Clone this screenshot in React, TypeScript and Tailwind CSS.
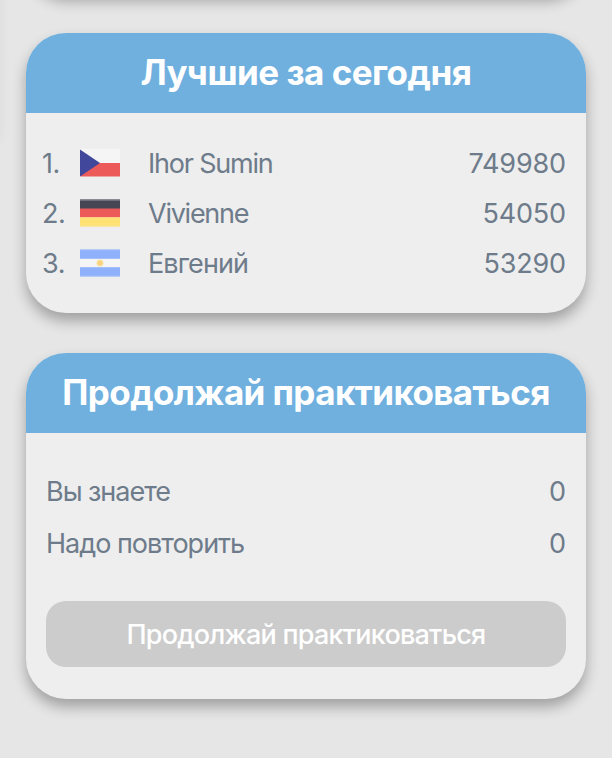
import type { ReactNode } from "react";

function CzechFlag() {
  return (
    <svg width="40" height="28" viewBox="0 0 40 28" className="block">
      <rect width="40" height="14" fill="#f5f5f5" />
      <rect y="14" width="40" height="14" fill="#ec5a5a" />
      <path d="M0 0.5 20 14 0 27.5Z" fill="#41479b" />
      <rect y="27" width="40" height="1" fill="#eda4a4" />
    </svg>
  );
}

function GermanFlag() {
  return (
    <svg width="40" height="28" viewBox="0 0 40 28" className="block">
      <rect width="40" height="10" fill="#464655" />
      <rect y="9.5" width="40" height="9" fill="#ec5a5a" />
      <rect y="18.3" width="40" height="9.7" fill="#ffe174" />
      <rect width="40" height="1.6" fill="#8b8b94" />
      <rect y="26.6" width="40" height="1.4" fill="#f7e6a4" />
    </svg>
  );
}

function ArgentineFlag() {
  return (
    <svg width="40" height="28" viewBox="0 0 40 28" className="block">
      <rect width="40" height="28" fill="#8fb1fb" />
      <rect y="9.8" width="40" height="8.4" fill="#f5f5f5" />
      <circle cx="20" cy="14" r="3.6" fill="#fae3ad" />
      <circle cx="20" cy="14" r="2.5" fill="#f8d27c" />
      <rect width="40" height="1.2" fill="#b5caf5" />
      <rect y="26.8" width="40" height="1.2" fill="#b5caf5" />
    </svg>
  );
}

function Card({ title, className, children }: { title: ReactNode; className: string; children: ReactNode }) {
  return (
    <section className={`shrink-0 rounded-[40px] bg-[#eeeeee] shadow-[0_8px_14px_rgba(0,0,0,0.3)] ${className}`}>
      <h2 className="flex h-20 items-center justify-center whitespace-nowrap rounded-t-[40px] bg-[#70b0df] pb-0.5 text-[35px] font-bold text-white">
        {title}
      </h2>
      {children}
    </section>
  );
}

const leaders = [
  { place: "1.", flag: <CzechFlag />, name: "Ihor Sumin", score: "749980", tracking: "tracking-[-1.2px]" },
  { place: "2.", flag: <GermanFlag />, name: "Vivienne", score: "54050", tracking: "tracking-[-1.25px]" },
  { place: "3.", flag: <ArgentineFlag />, name: "Евгений", score: "53290", tracking: "tracking-[-0.9px]" },
];

export default function App() {
  return (
    <main className="relative flex h-[758px] w-[612px] flex-col gap-10 overflow-hidden bg-[#e6e6e6] px-[26px] font-['Inter','Liberation_Sans',sans-serif] text-[27px] leading-[34px] text-[#6d7b8a]">
      <div className="absolute -left-10 -top-10 h-[180px] w-10 shadow-[0_0_12px_rgba(0,0,0,0.05)]" />
      <div className="-mt-[87px] h-20 shrink-0 rounded-[40px] bg-[#eeeeee] shadow-[0_8px_14px_rgba(0,0,0,0.3)]" />

      <Card title={<span className="tracking-[-0.5px]">Лучшие за сегодня</span>} className="h-[280px]">
        <ul className="flex flex-col pl-4 pr-5 pt-[25px]">
          {leaders.map((l) => (
            <li key={l.place} className="flex h-[50px] items-center">
              <span className="w-[38px] pt-0.5 tracking-[-0.4px]">{l.place}</span>
              {l.flag}
              <span className={`ml-7 flex-1 pt-0.5 ${l.tracking}`}>{l.name}</span>
              <span className="pt-0.5 tracking-[-0.15px]">{l.score}</span>
            </li>
          ))}
        </ul>
      </Card>

      <Card title={<span className="tracking-[-0.6px]">Продолжай практиковаться</span>} className="h-[346px]">
        <div className="flex flex-col px-5 pt-[33px]">
          <div className="flex h-[52px] items-center justify-between">
            <span className="tracking-[-1.03px]">Вы знаете</span>
            <span>0</span>
          </div>
          <div className="flex h-[52px] items-center justify-between">
            <span className="tracking-[-1px]">Надо повторить</span>
            <span>0</span>
          </div>
          <button className="mt-[31px] h-[66px] rounded-[20px] bg-[#cccccc] pt-0.5 font-medium tracking-[-0.77px] text-white">
            Продолжай практиковаться
          </button>
        </div>
      </Card>
    </main>
  );
}
